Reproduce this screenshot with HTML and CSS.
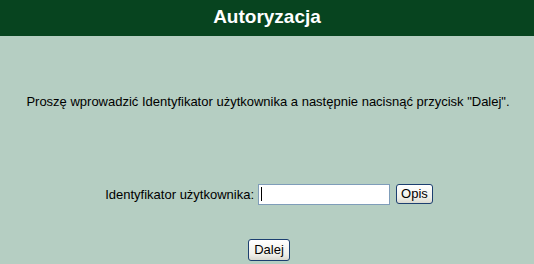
FILE: index.html
```html
<!DOCTYPE html>
<html lang="pl">
<head>
<meta charset="utf-8">
<title>Autoryzacja</title>
<link rel="stylesheet" href="styles.css">
</head>
<body>
<div class="header">Autoryzacja</div>
<p class="info">Proszę wprowadzić Identyfikator użytkownika a następnie nacisnąć przycisk "Dalej".</p>
<div class="row">
  <label class="label" for="uid">Identyfikator użytkownika:</label>
  <span class="field"><span class="caret"></span></span>
  <span class="btn">Opis</span>
</div>
<div class="actions"><span class="btn btn-next">Dalej</span></div>
</body>
</html>
```
FILE: styles.css
```css
html, body {
  margin: 0;
  padding: 0;
  background: #b5cec2;
  font-family: "Liberation Sans", Arial, sans-serif;
  font-size: 13px;
  color: #000;
}
.header {
  height: 36px;
  background: #07441f;
  color: #fff;
  font-weight: bold;
  font-size: 19px;
  line-height: 34px;
  text-align: center;
}
.info {
  margin: 58px 0 0;
  text-align: center;
  line-height: 15px;
  padding-left: 2px;
}
.row {
  margin-top: 74px;
  display: flex;
  justify-content: center;
  align-items: center;
  height: 22px;
  padding-left: 4px;
}
.label { margin-right: 4px; }
.field {
  height: 19px;
  background: #fff;
  border: 1px solid #7f9db9;
  display: flex;
  align-items: center;
  padding-left: 2px;
  box-sizing: content-box;
  margin-right: 6px;
  width: 128px;
}
.caret {
  width: 1px;
  height: 14px;
  background: #000;
}
.btn {
  display: inline-block;
  border: 1px solid #1c3f70;
  border-radius: 3px;
  background: linear-gradient(#ffffff, #f0f0ea 70%, #d9d9d0);
  padding: 0 4px;
  height: 18px;
  line-height: 18px;
  box-sizing: content-box;
}
.actions {
  margin-top: 34px;
  display: flex;
  justify-content: center;
  padding-left: 4px;
}
.btn-next {
  height: 20px;
  line-height: 20px;
  padding: 0 5px;
}
```
